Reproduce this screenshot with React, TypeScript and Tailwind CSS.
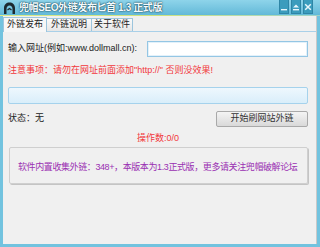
const FONT = "font-['Liberation_Sans','Noto_Sans_CJK_SC',sans-serif]";

function HoodIcon() {
  return (
    <svg width="13" height="12" viewBox="0 0 13 12">
      <path d="M1 12 V6 C1 2.5 3.5 0.5 6.5 0.5 C9.5 0.5 12 2.5 12 6 V12 H9.5 V7 C9.5 5 8.2 3.6 6.5 3.6 C4.8 3.6 3.5 5 3.5 7 V12 Z" fill="#1d2a30" />
      <path d="M4.5 8 L6.5 6.5 L8.5 8" stroke="#1d2a30" strokeWidth="1.2" fill="none" />
    </svg>
  );
}

function TitleButton({ kind }: { kind: "min" | "max" | "close" }) {
  return (
    <div className="w-[10px] h-[14px] bg-[#3b9cbd] border-x border-b border-[#2f86a6] flex items-center justify-center">
      <svg width="8" height="8" viewBox="0 0 8 8">
        {kind === "min" && <rect x="1" y="6" width="6" height="1.4" fill="#e8f6fb" />}
        {kind === "max" && (
          <>
            <path d="M1 4.5 L4 1.5 L7 4.5 Z" fill="#e8f6fb" />
            <rect x="1" y="6" width="6" height="1.4" fill="#e8f6fb" />
          </>
        )}
        {kind === "close" && (
          <path d="M1.2 1.2 L6.8 6.8 M6.8 1.2 L1.2 6.8" stroke="#e8f6fb" strokeWidth="1.5" />
        )}
      </svg>
    </div>
  );
}

export default function App() {
  const tabs = ["外链发布", "外链说明", "关于软件"];
  return (
    <div className={`w-[320px] h-[247px] flex flex-col bg-[#72c3df] ${FONT}`}>
      {/* title bar */}
      <div className="h-[15px] flex items-start bg-gradient-to-b from-[#8ed4ea] to-[#62b9d8]">
        <div className="ml-[3px] mt-[2px]">
          <HoodIcon />
        </div>
        <div className="ml-[3px] mt-[2px] text-[10px] leading-[12px] font-bold tracking-[-0.4px] text-[#f4fbfe] [text-shadow:0_0_1px_#0b3a4a,0_0_2px_#0b3a4a]">
          兜帽SEO外链发布匕首 1.3 正式版
        </div>
        <div className="ml-auto mr-[7px] flex gap-[2px]">
          <TitleButton kind="min" />
          <TitleButton kind="max" />
          <TitleButton kind="close" />
        </div>
      </div>
      <div className="h-[1px] bg-gradient-to-r from-[#d9e98a] via-[#cfe27c] to-[#9fd3c8]" />

      {/* window body */}
      <div className="flex-1 mx-[3px] mb-[3px] bg-[#f0f0f0] flex flex-col border-r border-[#c9c9c9]">
        {/* tab strip */}
        <div className="h-[15px] flex items-end">
          {tabs.map((t, i) => (
            <div
              key={t}
              className={
                i === 0
                  ? "w-[44px] h-[15px] -mb-px z-10 flex items-center justify-center bg-[#f7f7f7] border border-b-0 border-[#9cc5dd] text-[9px] text-[#222]"
                  : i === 1
                  ? "w-[45px] h-[13px] flex items-center justify-center bg-gradient-to-b from-[#fafafa] to-[#e6e6e6] border border-l-0 border-b-0 border-[#9cc5dd] text-[9px] text-[#222]"
                  : "w-[41px] h-[13px] flex items-center justify-center bg-gradient-to-b from-[#fafafa] to-[#e6e6e6] border border-l-0 border-b-0 border-[#9cc5dd] text-[9px] text-[#222]"
              }
            >
              {t}
            </div>
          ))}
        </div>

        {/* tab page */}
        <div className="flex-1 border-t border-[#a9d0e8] flex flex-col pl-[5px] pr-[8px]">
          <div className="mt-[9px] flex items-center h-[16px]">
            <span className="text-[9px] text-[#222] whitespace-nowrap">输入网址(例如:www.dollmall.cn):</span>
            <div className="ml-auto w-[161px] h-[16px] bg-white border border-[#94c6e4] shadow-[inset_0_0_0_1px_#e3f1fa]" />
          </div>

          <div className="mt-[7px] h-[12px] leading-[12px] text-[9px] text-[#f2383c] whitespace-nowrap">
            注意事项：请勿在网址前面添加"http://" 否则没效果!
          </div>

          <div className="mt-[11px] h-[17px] rounded-[2px] border border-[#a5d2ec] bg-gradient-to-b from-[#eef7fd] to-[#d9eefa]" />

          <div className="mt-[7px] flex items-center justify-between">
            <span className="text-[9px] text-[#222]">状态：无</span>
            <div className="w-[92px] h-[16px] rounded-[2px] border border-[#a9a9a9] bg-gradient-to-b from-[#f4f4f4] to-[#d9d9d9] flex items-center justify-center text-[9px] text-[#333]">
              开始刷网站外链
            </div>
          </div>

          <div className="mt-[5px] h-[12px] leading-[12px] text-center text-[9px] text-[#f2383c]">
            操作数:0/0
          </div>

          <div className="mt-[3px] ml-px h-[37px] rounded-[2px] border border-[#cfcfcf] shadow-[1px_1px_0_#c4c4c4] flex items-center pl-[8px] pt-[4px]">
            <span className="text-[9px] tracking-[-0.4px] text-[#9a2fb2] whitespace-nowrap">
              软件内置收集外链：348+，本版本为1.3正式版，更多请关注兜帽破解论坛
            </span>
          </div>
        </div>
      </div>
    </div>
  );
}
